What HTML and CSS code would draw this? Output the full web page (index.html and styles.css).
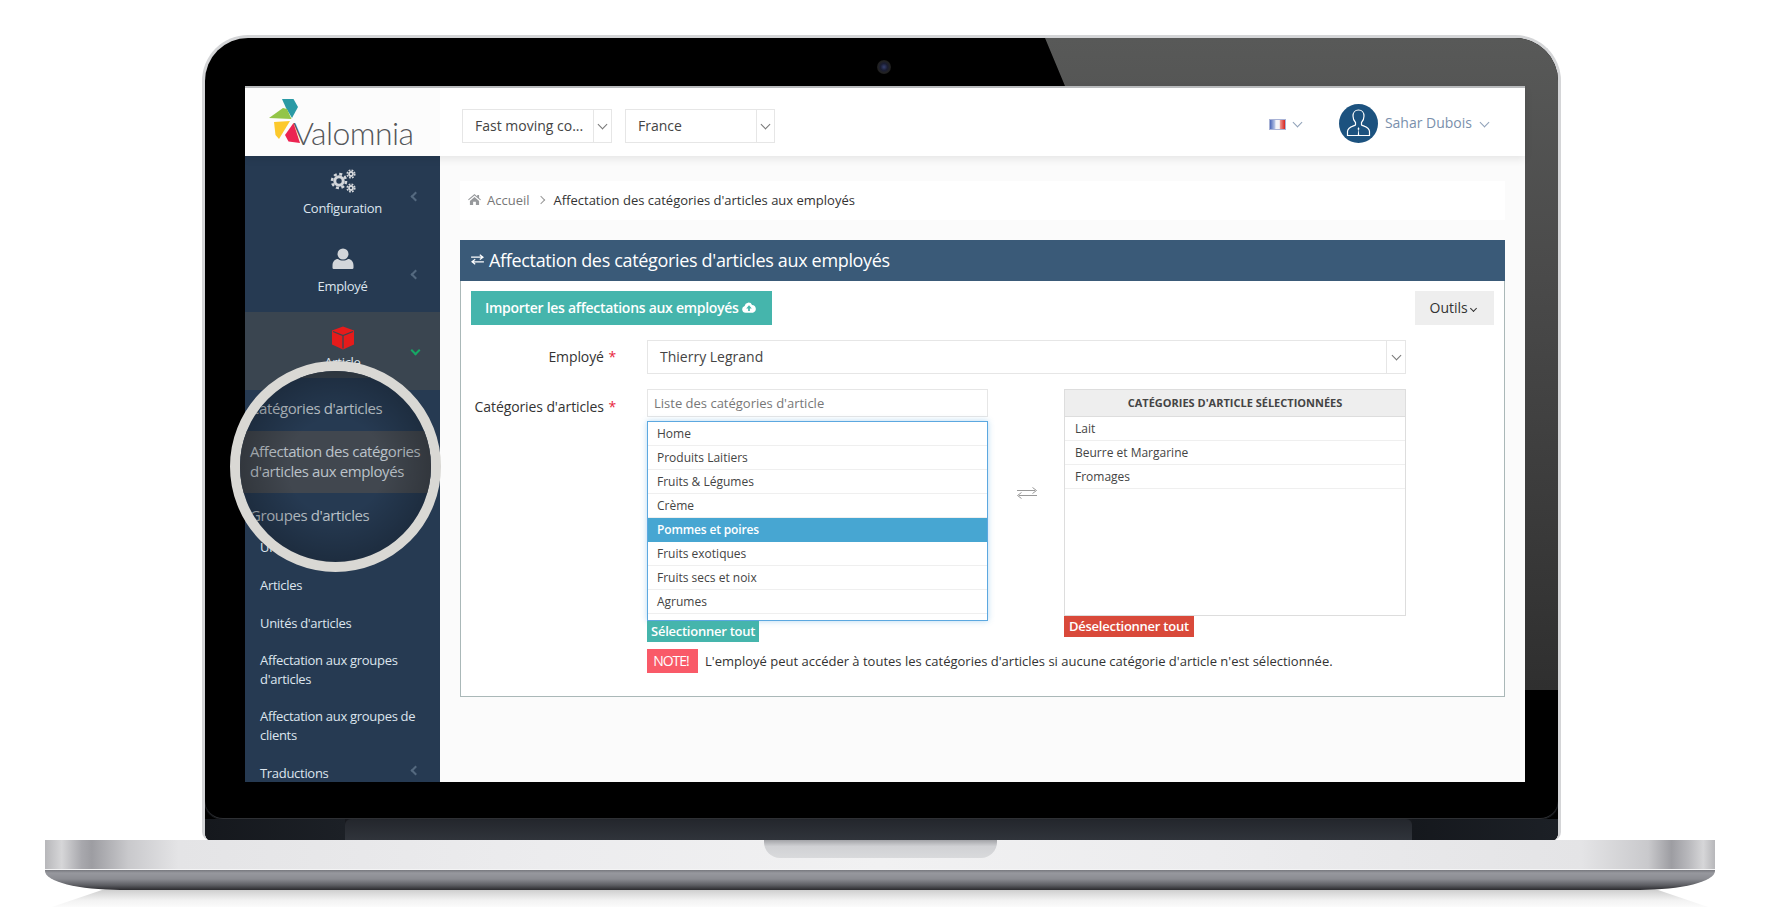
FILE: index.html
```html
<!DOCTYPE html>
<html lang="fr">
  <head>
    <meta charset="UTF-8" />
    <title>Valomnia</title>
    <link rel="stylesheet" href="styles.css">
  </head>
  <body>
    <div class="lid">
      <div class="glare"></div>
      <div class="camera"></div>
      <div class="bezel">
        <div class="screen">
          <header class="topbar">
            <div class="logo">
              <svg class="logo-mark" viewBox="0 0 33 46" width="33" height="46">
                <polygon points="13,0 24.500,0 29,8 23,19 17,9" fill="#2a9aa5" />
                <polygon points="0,19 14,9 18,10 22.500,20" fill="#93c548" />
                <polygon points="5,23 21,22 10,40 6.500,36" fill="#fcc92c" />
                <polygon points="24.500,24 31,44 19.500,42.500 16,36" fill="#ec2452" />
              </svg>
              <span class="logo-text">Valomnia</span>
            </div>
            <div class="top-selects">
              <div class="select select-top">
                <span class="select-text">Fast moving co...</span>
                <span class="select-arrow"><i class="chev down"></i></span>
              </div>
              <div class="select select-top country">
                <span class="select-text">France</span>
                <span class="select-arrow"><i class="chev down"></i></span>
              </div>
            </div>
            <div class="top-right">
              <span class="flag"></span>
              <i class="chev down lang-chev"></i>
              <svg class="avatar" viewBox="0 0 39 39" width="39" height="39">
                <circle cx="19.500" cy="19.500" r="19.500" fill="#1c527f" />
                <path d="M19.500 6c-3.500 0-5.500 2.800-5.500 6 0 3 1 5 2.500 6.500v2.500c-2 1.200-8 2-8 6.500v4h22v-4c0-4.500-6-5.300-8-6.500v-2.500c1.500-1.500 2.500-3.500 2.500-6.500 0-3.200-2-6-5.500-6z" fill="none" stroke="#fff" stroke-width="1.200" />
                <path d="M19.500 23l-1 2 .8 1-.6 6h1.600l-.6-6 .8-1z" fill="#fff" />
              </svg>
              <span class="user-name">Sahar Dubois</span>
              <i class="chev down user-chev"></i>
            </div>
          </header>

          <div class="layout">
            <nav class="sidebar">
              <a class="nav-item">
                <svg class="nav-icon" viewBox="0 0 26 24" width="26" height="24">
                  <g fill="none" stroke="#d3d6da">
                    <circle cx="9" cy="12" r="4.200" stroke-width="3" />
                    <circle cx="9" cy="12" r="7" stroke-width="2.600" stroke-dasharray="3 2.500" />
                    <circle cx="21" cy="5" r="2" stroke-width="1.800" />
                    <circle cx="21" cy="5" r="3.800" stroke-width="1.600" stroke-dasharray="1.800 1.200" />
                    <circle cx="21" cy="19" r="2" stroke-width="1.800" />
                    <circle cx="21" cy="19" r="3.800" stroke-width="1.600" stroke-dasharray="1.800 1.200" />
                  </g>
                </svg>
                <span>Configuration</span>
                <i class="chev left nav-chev"></i>
              </a>
              <a class="nav-item">
                <svg class="nav-icon" viewBox="0 0 26 24" width="26" height="24">
                  <circle cx="13" cy="7" r="5.500" fill="#d3d6da" />
                  <path d="M3.500 22c-.8 0-1-.8-1-1.500v-2c0-4 2.500-6.500 5.500-6.500 1.500 1 3 1.500 5 1.500s3.500-.5 5-1.500c3 0 5.500 2.500 5.500 6.500v2c0 .7-.2 1.500-1 1.500z" fill="#d3d6da" />
                </svg>
                <span>Employé</span>
                <i class="chev left nav-chev"></i>
              </a>
              <a class="nav-item open">
                <svg class="nav-icon" viewBox="0 0 26 24" width="26" height="24">
                  <path d="M13 .5l11 4v14l-11 5-11-5v-14z" fill="#e61b1b" />
                  <path d="M3 5.500l10 4 10-4M13 9.500v13" fill="none" stroke="#3a4550" stroke-width="1.300" />
                </svg>
                <span>Article</span>
                <i class="chev down nav-chev green"></i>
              </a>
              <ul class="sub-nav">
                <!-- first three rows are shown inside the lens -->
                <li class="under-lens"></li>
                <li>Univers</li>
                <li>Articles</li>
                <li>Unités d'articles</li>
                <li class="two-lines">Affectation aux groupes d'articles</li>
                <li class="two-lines">Affectation aux groupes de clients</li>
                <li>Traductions<i class="chev left nav-chev"></i></li>
              </ul>
            </nav>

            <main class="main">
              <div class="breadcrumb">
                <svg viewBox="0 0 14 12" width="13" height="11">
                  <path d="M7 0l3 2.600V1h2v3.300L14 6l-.7.8L7 1.500.7 6.800 0 6zM2 7.500l5-4.200 5 4.200V12H8.500V8.500h-3V12H2z" fill="#97999c" />
                </svg>
                <a class="crumb">Accueil</a>
                <i class="chev right crumb-chev"></i>
                <span class="crumb-current">Affectation des catégories d'articles aux employés</span>
              </div>

              <section class="panel">
                <h1 class="panel-title">
                  <svg viewBox="0 0 14 12" width="13" height="11">
                    <path d="M0 3.500h12M9.500 .8l3.500 2.700L9.500 6M14 8.500H2M4.500 5.800L1 8.500l3.500 2.700" fill="none" stroke="#fff" stroke-width="1.300" />
                  </svg>
                  Affectation des catégories d'articles aux employés
                </h1>
                <div class="panel-body">
                  <div class="toolbar">
                    <button class="btn-import">
                      Importer les affectations aux employés
                      <svg viewBox="0 0 16 12" width="14" height="11">
                        <path d="M4 12a4 4 0 0 1-1-7.800A4.500 4.500 0 0 1 11.500 3 4.600 4.600 0 0 1 12.500 12zM8 3.500L4.800 7H7v3h2V7h2.200z" fill="#fff" fill-rule="evenodd" />
                      </svg>
                    </button>
                    <button class="btn-tools">Outils <i class="chev down tools-chev"></i></button>
                  </div>

                  <div class="form-row">
                    <label class="form-label">Employé <b>*</b></label>
                    <div class="select select-employee">
                      <span class="select-text">Thierry Legrand</span>
                      <span class="select-arrow"><i class="chev down"></i></span>
                    </div>
                  </div>

                  <div class="form-row">
                    <label class="form-label cat-label">Catégories d'articles <b>*</b></label>
                    <div class="picker">
                      <div class="picker-col">
                        <div class="search">Liste des catégories d'article</div>
                        <ul class="list list-left">
                          <li>Home</li>
                          <li>Produits Laitiers</li>
                          <li>Fruits &amp; Légumes</li>
                          <li>Crème</li>
                          <li class="active">Pommes et poires</li>
                          <li>Fruits exotiques</li>
                          <li>Fruits secs et noix</li>
                          <li>Agrumes</li>
                        </ul>
                        <span class="tag tag-green">Sélectionner tout</span>
                      </div>
                      <div class="swap">
                        <svg viewBox="0 0 22 14" width="22" height="14">
                          <path d="M3 9.500h18M5.500 6.500L1.500 9.500l4 3M1 4.500h18M16.500 1.500l4 3-4 3" fill="none" stroke="#999" stroke-width="1" />
                        </svg>
                      </div>
                      <div class="picker-col">
                        <div class="selected-box">
                          <div class="selected-head">CATÉGORIES D'ARTICLE SÉLECTIONNÉES</div>
                          <ul class="list">
                            <li>Lait</li>
                            <li>Beurre et Margarine</li>
                            <li>Fromages</li>
                          </ul>
                        </div>
                        <span class="tag tag-red">Déselectionner tout</span>
                      </div>
                    </div>
                  </div>

                  <p class="note">
                    <span class="note-badge">NOTE!</span>
                    L'employé peut accéder à toutes les catégories d'articles si aucune catégorie d'article n'est sélectionnée.
                  </p>
                </div>
              </section>
            </main>
          </div>

          <!-- magnifier over the sidebar -->
          <div class="lens">
            <div class="lens-inner">
              <div class="lens-top"></div>
              <div class="lens-row lens-first">Catégories d'articles</div>
              <div class="lens-row lens-hover">Affectation des catégories d'articles aux employés</div>
              <div class="lens-row lens-last">Groupes d'articles</div>
            </div>
          </div>
        </div>
      </div>
      <div class="hinge">
        <div class="hinge-side"></div>
        <div class="hinge-mid"></div>
        <div class="hinge-side hinge-right"></div>
      </div>
    </div>

    <div class="base">
      <div class="base-top"><div class="notch"></div></div>
      <div class="base-lip"></div>
    </div>
    <div class="reflection"></div>
  </body>
</html>
```

FILE: styles.css
```css
* {
  margin: 0;
  padding: 0;
  box-sizing: border-box;
}
html,
body {
  width: 1766px;
  height: 915px;
  background: #fff;
  font-family: "Open Sans", sans-serif;
  font-size: 13px;
  color: #333;
  overflow: hidden;
}
body {
  display: flex;
  flex-direction: column;
  align-items: flex-start;
  padding-top: 35px;
}
ul {
  list-style: none;
}

/* laptop */
.lid {
  position: relative;
  width: 1359px;
  height: 805px;
  margin-left: 202px;
  border: 3px solid #d4d5d7;
  border-bottom: 0;
  border-radius: 46px 46px 8px 8px;
  background: #000;
  display: flex;
  flex-direction: column;
  overflow: hidden;
}
.glare {
  position: absolute;
  inset: 0;
  background: linear-gradient(180deg, #585958, #4a4a4a 30%, #2d2d2d 85%);
  clip-path: polygon(840px 0, 100% 0, 100% 652px, 1320px 652px, 1320px 48px, 860px 48px);
}
.camera {
  position: absolute;
  left: 672px;
  top: 22px;
  width: 14px;
  height: 14px;
  border-radius: 50%;
  background: radial-gradient(circle, #36406e 0, #1a1d33 35%, #222 60%, #0c0c0c 100%);
}
.bezel {
  flex: 1;
  padding: 48px 33px 36px 40px;
  border-radius: 0 0 18px 18px;
  border-bottom: 1px solid #2e3034;
  box-shadow: 0 0 0 1px #17191d;
}
.hinge {
  height: 22px;
  display: flex;
  background: #17191e;
}
.hinge-side {
  width: 140px;
  background: linear-gradient(90deg, #15181d, #1c2026);
}
.hinge-right {
  width: 146px;
}
.hinge-mid {
  flex: 1;
  background: linear-gradient(180deg, #23262c, #30343b);
  border-radius: 6px 6px 0 0;
}
.base {
  width: 1670px;
  margin-left: 45px;
}
.base-top {
  height: 30px;
  display: flex;
  justify-content: center;
  background: linear-gradient(90deg, #b7b7ba 0, #d6d6d8 1%, #a8a8ad 2.200%, #9d9da2 2.800%, #c9c9cc 5%, #e4e4e6 8%, #ececee 30%, #f1f1f2 50%, #ececee 70%, #e4e4e6 92%, #c9c9cc 96%, #9d9da2 97.400%, #b8b8bc 98.400%, #d6d6d8 99.300%, #b7b7ba 100%);
  border-bottom: 1px solid #f4f4f5;
}
.notch {
  width: 233px;
  height: 18px;
  border-radius: 0 0 16px 16px;
  background: linear-gradient(180deg, #a3a4a8, #d0d1d4 35%, #d9dadc);
}
.base-lip {
  height: 20px;
  border-radius: 0 0 75px 75px / 0 0 19px 19px;
  background: linear-gradient(180deg, #77787e 0, #97989e 15%, #8b8c92 45%, #5e5f64 75%, #2b2b2f 100%);
}
.reflection {
  width: 1656px;
  height: 17px;
  margin-left: 52px;
  background: linear-gradient(180deg, #cfcfcf, #f2f2f2 60%, #fbfbfb);
  clip-path: polygon(50px 0, calc(100% - 50px) 0, 100% 100%, 0 100%);
}

/* screen */
.screen {
  position: relative;
  width: 1280px;
  height: 696px;
  display: flex;
  flex-direction: column;
  background: #fbfbfb;
}
.topbar {
  height: 70px;
  flex-shrink: 0;
  display: flex;
  align-items: center;
  background: #fff;
  border-top: 2px solid #b9bbbd;
  box-shadow: 0 3px 8px rgba(0, 0, 0, 0.09);
  position: relative;
  z-index: 1;
}
.logo {
  width: 195px;
  height: 100%;
  flex-shrink: 0;
  display: flex;
  align-items: flex-end;
  padding: 0 0 11px 24px;
  background: #fcfcfc;
}
.logo-mark {
  flex-shrink: 0;
}
.logo-text {
  margin: 0 0 -4px -9px;
  font-family: "Lato", sans-serif;
  font-weight: 300;
  font-size: 32px;
  line-height: 33px;
  letter-spacing: -0.6px;
  color: #55575a;
}
.top-selects {
  display: flex;
  gap: 13px;
  margin-left: 22px;
  margin-top: 8px;
}
.select {
  display: flex;
  align-items: stretch;
  border: 1px solid #e6e6e6;
  background: #fff;
  color: #444;
  height: 34px;
}
.select-top {
  width: 150px;
}
.select-text {
  flex: 1;
  display: flex;
  align-items: center;
  padding: 0 0 2px 12px;
  font-size: 14px;
  white-space: nowrap;
}
.select-arrow {
  width: 18px;
  flex-shrink: 0;
  display: flex;
  align-items: center;
  justify-content: center;
  border-left: 1px solid #e6e6e6;
}
.chev {
  display: inline-block;
  width: 7px;
  height: 7px;
  border-right: 1px solid #777;
  border-bottom: 1px solid #777;
}
.chev.down {
  transform: translateY(-2px) rotate(45deg);
}
.chev.left {
  transform: rotate(135deg);
}
.chev.right {
  transform: rotate(-45deg);
}
.top-right {
  margin-left: auto;
  margin-top: 4px;
  display: flex;
  align-items: center;
  padding-right: 37px;
  color: #7a90ac;
}
.flag {
  width: 17px;
  height: 11px;
  margin-right: 8px;
  border: 1px solid #a9b3d6;
  background: linear-gradient(90deg, #4a66b8 0, #aebde2 30%, #f4f4f8 40%, #f4f4f8 62%, #eb8f8a 70%, #d8231e 100%);
}
.lang-chev,
.user-chev {
  border-color: #8fa1b8;
}
.avatar {
  margin-left: 38px;
  margin-top: -1px;
}
.user-name {
  margin-left: 7px;
  margin-right: 9px;
  margin-top: -3px;
  font-size: 14px;
}
.layout {
  flex: 1;
  min-height: 0;
  display: flex;
}

/* sidebar */
.sidebar {
  width: 195px;
  flex-shrink: 0;
  background: #263a52;
  color: #dde5ee;
  overflow: hidden;
  letter-spacing: -0.3px;
}
.nav-item {
  position: relative;
  height: 78px;
  display: flex;
  flex-direction: column;
  align-items: center;
  padding-top: 13px;
  gap: 6px;
}
.nav-item.open {
  background: #3a4550;
  padding-top: 14px;
  gap: 3px;
}
.nav-icon {
  display: block;
}
.nav-chev {
  position: absolute;
  right: 21px;
  top: 37px;
  border-color: #54697f;
  border-width: 0 2px 2px 0;
}
.nav-chev.green {
  border-color: #16a864;
  top: 37px;
}
.sub-nav {
  padding-top: 6px;
}
.sub-nav li {
  position: relative;
  display: flex;
  align-items: center;
  height: 38px;
  padding: 0 12px 0 15px;
  line-height: 19px;
}
.sub-nav .two-lines {
  height: 56px;
}
.sub-nav .under-lens {
  height: 132px;
}
.sub-nav .nav-chev {
  top: 13px;
}

/* main */
.main {
  flex: 1;
  min-width: 0;
  padding: 25px 20px 0 20px;
}
.breadcrumb {
  height: 39px;
  margin-bottom: 20px;
  display: flex;
  align-items: center;
  padding: 0 0 2px 8px;
  background: #fff;
}
.crumb {
  margin-left: 6px;
  color: #777;
}
.crumb-chev {
  width: 6px;
  height: 6px;
  margin: 0 10px 0 8px;
  border-color: #999;
}
.crumb-current {
  color: #333;
}
.panel {
  border: 1px solid #aab8b8;
  border-top: 0;
  background: #fff;
}
.panel-title {
  height: 41px;
  margin: 0 -1px;
  display: flex;
  align-items: center;
  gap: 5px;
  padding: 0 0 2px 11px;
  background: #3a5a78;
  color: #fff;
  font-size: 18px;
  font-weight: 400;
  letter-spacing: -0.33px;
}
.panel-body {
  padding: 10px 10px 23px;
}
.toolbar {
  display: flex;
  justify-content: space-between;
  margin-bottom: 15px;
}
.btn-import,
.btn-tools {
  height: 34px;
  border: 0;
  padding-bottom: 2px;
  font-family: "Open Sans", sans-serif;
  font-size: 14px;
}
.btn-import {
  width: 301px;
  padding-right: 2px;
  background: #45b5ac;
  color: #fff;
  font-weight: 600;
  letter-spacing: -0.28px;
}
.btn-tools {
  width: 79px;
  padding-right: 3px;
  background: #eee;
  color: #333;
}
.tools-chev {
  width: 5px;
  height: 5px;
  border-color: #333;
}
.form-row {
  display: flex;
  align-items: flex-start;
  margin-bottom: 15px;
}
.form-label {
  width: 176px;
  flex-shrink: 0;
  padding-right: 31px;
  text-align: right;
  font-size: 14px;
  line-height: 34px;
  color: #333;
  white-space: nowrap;
  letter-spacing: -0.1px;
}
.form-label b {
  margin-left: 1px;
  color: #e8273c;
  font-weight: 400;
}
.cat-label {
  line-height: 36px;
}
.select-employee {
  width: 759px;
}
.select-employee .select-arrow {
  width: 19px;
}
.picker {
  display: flex;
  align-items: flex-start;
  width: 759px;
}
.picker-col {
  width: 342px;
  display: flex;
  flex-direction: column;
  align-items: flex-start;
}
.swap {
  width: 75px;
  display: flex;
  justify-content: center;
  padding-top: 97px;
}
.search {
  width: 341px;
  height: 28px;
  padding-left: 6px;
  margin-bottom: 4px;
  line-height: 27px;
  border: 1px solid #e6e6e6;
  color: #777;
  font-size: 13px;
}
.list {
  font-size: 12px;
  color: #444;
}
.list li {
  height: 24px;
  padding-left: 10px;
  line-height: 23px;
  border-bottom: 1px solid #efefef;
}
.list-left {
  width: 341px;
  height: 200px;
  border: 1px solid #5ca8e0;
  box-shadow: 0 0 6px rgba(92, 168, 224, 0.45);
}
.list-left li {
  padding-left: 9px;
}
.list .active {
  background: #47a6d2;
  color: #fff;
  font-weight: 600;
  letter-spacing: -0.15px;
  border-bottom: 0;
}
.selected-box {
  width: 342px;
  height: 227px;
  border: 1px solid #ddd;
}
.selected-head {
  height: 27px;
  line-height: 25px;
  text-align: center;
  background: #eee;
  border-bottom: 1px solid #ddd;
  color: #444;
  font-size: 11px;
  font-weight: 700;
}
.tag {
  height: 21px;
  padding: 0 4px;
  line-height: 20px;
  color: #fff;
  font-size: 13px;
  font-weight: 600;
  letter-spacing: -0.25px;
}
.tag-green {
  background: #45b5ac;
}
.tag-red {
  background: #d9493a;
  padding: 0 5px;
}
.note {
  display: flex;
  align-items: center;
  gap: 7px;
  margin: -8px 0 0 176px;
  color: #333;
  font-size: 13px;
}
.note-badge {
  width: 51px;
  height: 24px;
  padding-right: 3px;
  line-height: 24px;
  text-align: center;
  background: #f95a68;
  color: #fff;
  font-size: 14px;
  letter-spacing: -1px;
}

/* magnifier */
.lens {
  position: absolute;
  left: -15px;
  top: 275px;
  width: 211px;
  height: 211px;
  border: 10px solid #d9d8d4;
  border-radius: 50%;
  background: #263a52;
  z-index: 2;
}
.lens-inner {
  position: relative;
  width: 100%;
  height: 100%;
  border-radius: 50%;
  overflow: hidden;
  color: #bcc3ca;
  font-size: 15px;
  line-height: 20px;
  letter-spacing: -0.4px;
}
.lens-inner::after {
  content: "";
  position: absolute;
  inset: 0;
  background: radial-gradient(circle, rgba(0, 0, 0, 0) 35%, rgba(0, 0, 0, 0.42) 100%);
}
.lens-top {
  height: 7px;
  background: #3a4550;
}
.lens-row {
  padding-left: 10px;
  white-space: nowrap;
}
.lens-first {
  height: 53px;
  padding-top: 20px;
}
.lens-hover {
  height: 62px;
  padding: 10px 0 0 10px;
  background: #41474f;
  white-space: normal;
}
.lens-last {
  padding-top: 12px;
}
```
